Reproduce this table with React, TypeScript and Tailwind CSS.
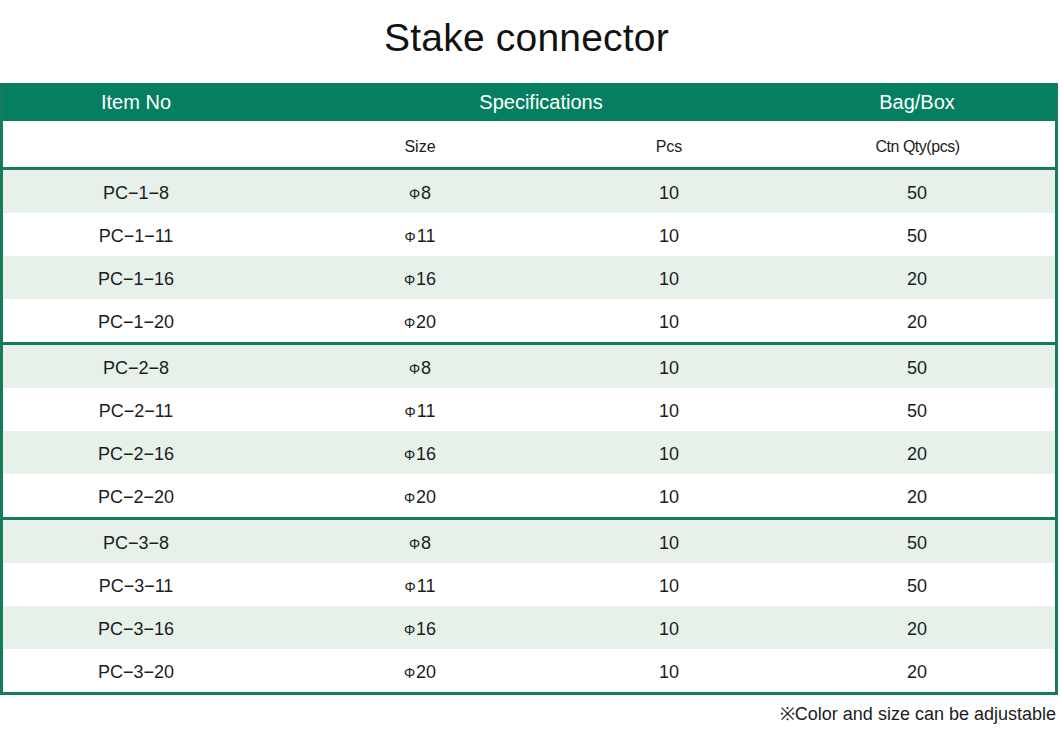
const groups = [1, 2, 3].map((g) => [
  { item: `PC−${g}−8`, size: "8", pcs: 10, qty: 50 },
  { item: `PC−${g}−11`, size: "11", pcs: 10, qty: 50 },
  { item: `PC−${g}−16`, size: "16", pcs: 10, qty: 20 },
  { item: `PC−${g}−20`, size: "20", pcs: 10, qty: 20 },
]);

const font = { fontFamily: '"Liberation Sans", Arial, sans-serif' };

export default function App() {
  return (
    <div className="w-[1062px] h-[736px] bg-white text-[#1c1c1c]" style={font}>
      <h1 className="h-[83px] flex items-center justify-center pb-[6px] pr-[9px] text-[39px] tracking-[0.005em] text-[#111]">
        Stake connector
      </h1>

      <div className="w-[1058px] border-x-[3px] border-b-[3px] border-[#167a5d]">
        <div className="h-[38px] bg-[#057f5f] text-white text-[20px] flex items-center">
          <div className="w-[266px] text-center">Item No</div>
          <div className="w-[540px] text-center pl-[4px]">Specifications</div>
          <div className="flex-1 text-center pr-[30px]">Bag/Box</div>
        </div>

        <div className="h-[49px] grid grid-cols-[266px_302px_196px_1fr] items-center text-[16px] pt-[5px] border-b-[3px] border-[#167a5d]">
          <div />
          <div className="text-center">Size</div>
          <div className="text-center">Pcs</div>
          <div className="text-center pl-[13px] tracking-[-0.03em]">Ctn Qty(pcs)</div>
        </div>

        {groups.map((rows, gi) => (
          <div key={gi} className={gi < 2 ? "border-b-[3px] border-[#167a5d]" : ""}>
            {rows.map((r, i) => (
              <div
                key={r.item}
                className={`h-[43px] grid grid-cols-[266px_302px_196px_1fr] items-center text-[18px] pt-[4px] ${
                  i % 2 === 0 ? "bg-[#e7f1ea]" : "bg-white"
                }`}
              >
                <div className="text-center">{r.item}</div>
                <div className="text-center">
                  <span className="text-[14px] mr-[1px]">Φ</span>
                  {r.size}
                </div>
                <div className="text-center">{r.pcs}</div>
                <div className="text-center pl-[12px]">{r.qty}</div>
              </div>
            ))}
          </div>
        ))}
      </div>

      <div className="w-[1058px] text-right text-[18px] mt-[6px] pr-[2px]">※Color and size can be adjustable</div>
    </div>
  );
}
